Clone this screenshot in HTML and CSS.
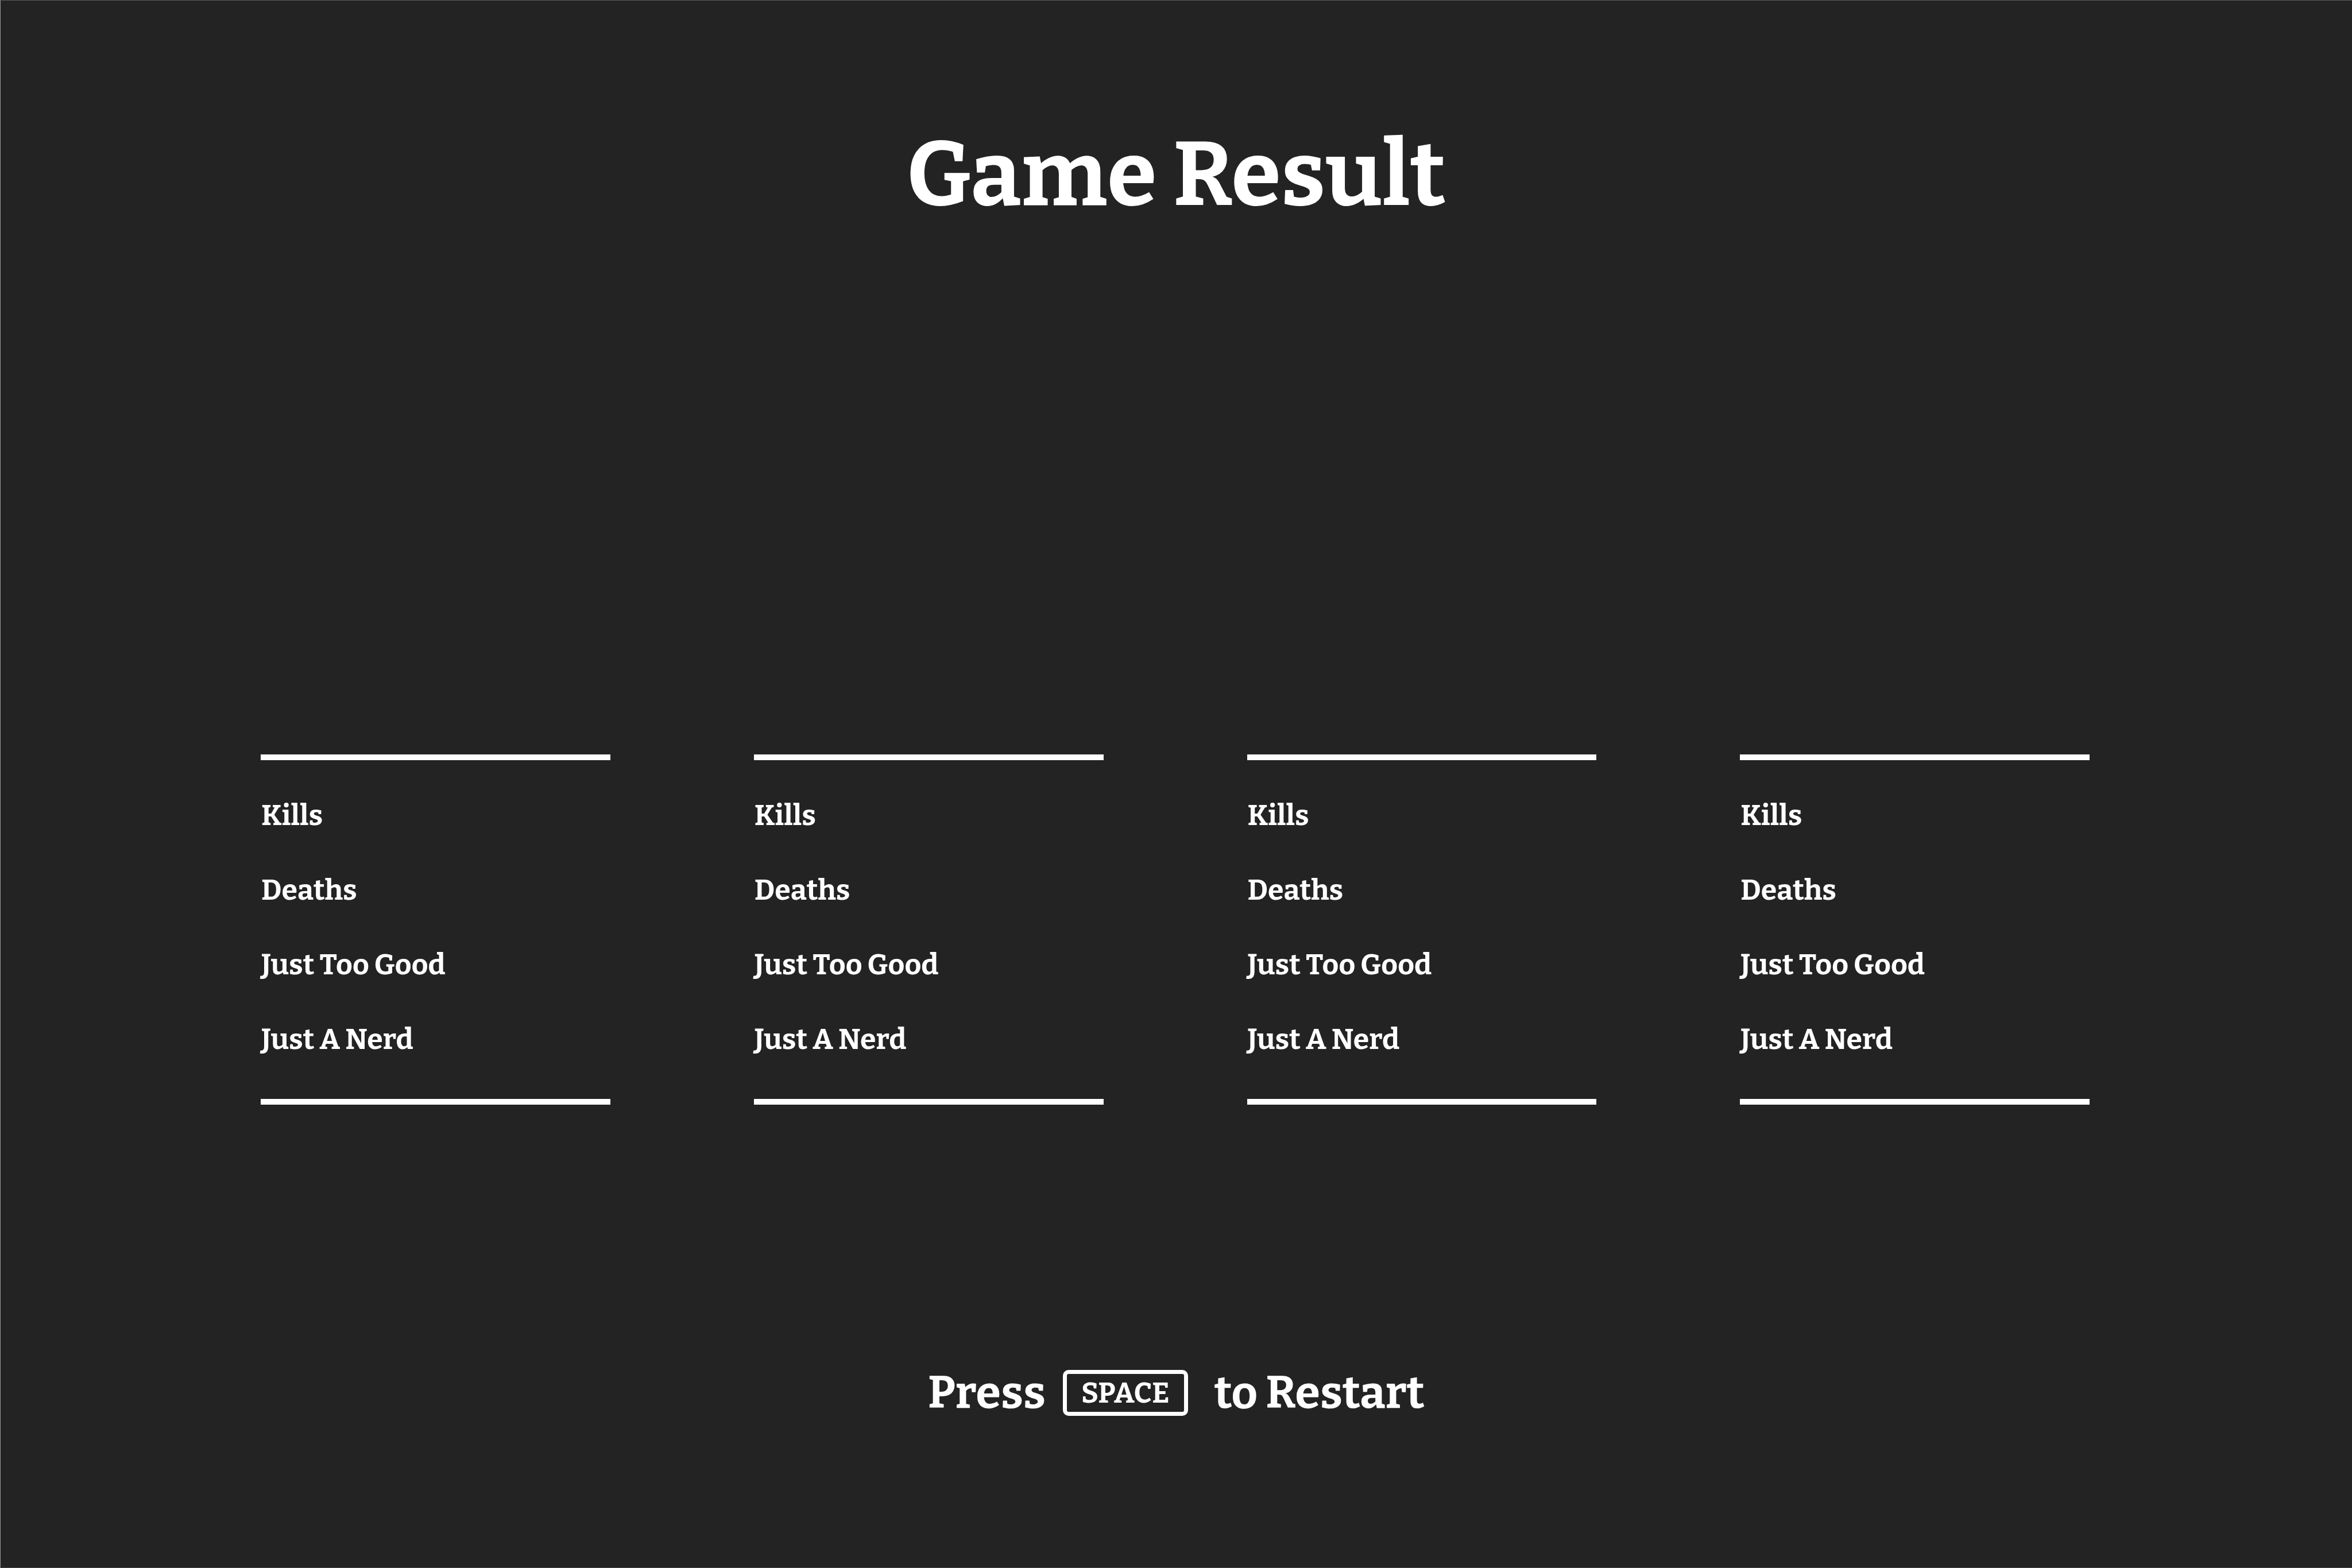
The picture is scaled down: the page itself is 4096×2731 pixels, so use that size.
FILE: index.html
```html
<!DOCTYPE html>
<html lang="en">
<head>
  <meta charset="utf-8">
  <meta name="viewport" content="width=device-width, initial-scale=1">
  <title>Game Result</title>
  <link rel="stylesheet" href="styles.css">
</head>
<body>
  <div class="screen">
    <h1 class="title">Game Result</h1>
    <main class="players">
      <ul class="stats">
        <li>Kills</li>
        <li>Deaths</li>
        <li>Just Too Good</li>
        <li>Just A Nerd</li>
      </ul>
      <ul class="stats">
        <li>Kills</li>
        <li>Deaths</li>
        <li>Just Too Good</li>
        <li>Just A Nerd</li>
      </ul>
      <ul class="stats">
        <li>Kills</li>
        <li>Deaths</li>
        <li>Just Too Good</li>
        <li>Just A Nerd</li>
      </ul>
      <ul class="stats">
        <li>Kills</li>
        <li>Deaths</li>
        <li>Just Too Good</li>
        <li>Just A Nerd</li>
      </ul>
    </main>
    <footer class="restart">
      <span>Press</span>
      <kbd class="key">SPACE</kbd>
      <span>to Restart</span>
    </footer>
  </div>
</body>
</html>
```
FILE: styles.css
```css
* {
  box-sizing: border-box;
}

body {
  margin: 0;
  background: #232323;
  color: #fff;
  font-family: "Bitter", "DejaVu Serif Condensed", "DejaVu Serif", serif;
  font-weight: 700;
}

.screen {
  display: flex;
  flex-direction: column;
  min-height: 100vh;
  padding: 210px 0 256px;
  border-top: 1px solid #595959;
  border-bottom: 1px solid #484448;
  border-left: 1px solid #999;
}

.title {
  margin: 0;
  font-size: 157px;
  line-height: 188px;
  text-align: center;
}

/* One column per player */
.players {
  display: grid;
  grid-template-columns: repeat(4, 1fr);
  column-gap: 250px;
  margin-top: 915px;
  padding: 0 457px 0 453px;
}

.stats {
  display: flex;
  flex-direction: column;
  gap: 70px;
  margin: 0;
  padding: 66px 0 74px 1px;
  border-top: 10px solid #fff;
  border-bottom: 10px solid #fff;
  font-size: 50px;
  line-height: 60px;
  list-style: none;
}

.restart {
  display: flex;
  align-items: center;
  justify-content: center;
  margin-top: auto;
  font-size: 79px;
  line-height: 96px;
}

.key {
  margin: 0 46px 0 30px;
  padding: 3px 25px;
  border: 7px solid #fff;
  border-radius: 10px;
  font-family: inherit;
  font-size: 50px;
  line-height: 60px;
}
```
